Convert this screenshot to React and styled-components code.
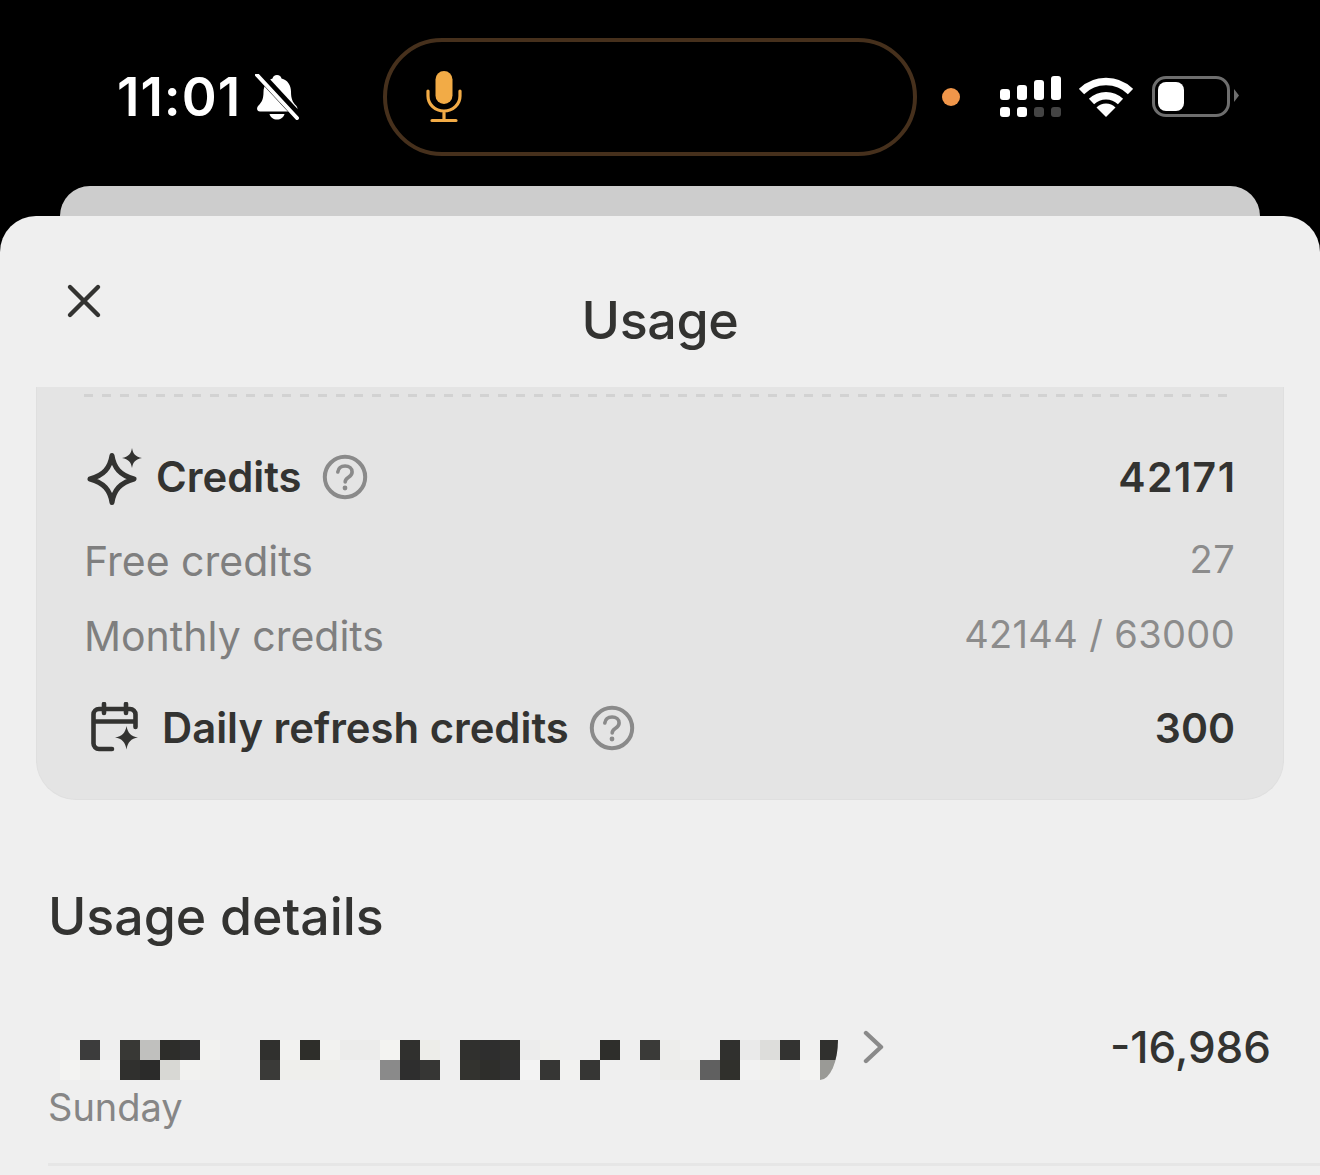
import React from 'react';
import styled, { createGlobalStyle } from 'styled-components';

const GlobalStyle = createGlobalStyle`
    html, body {
        margin: 0;
        padding: 0;
        background: #000;
    }
    body {
        font-family: Inter, "Liberation Sans", sans-serif;
    }
`;

const Screen = styled.div`
    width: 1320px;
    height: 1175px;
    overflow: hidden;
    background: #000;
`;

const StatusBar = styled.div`
    height: 186px;
    display: flex;
    align-items: flex-start;
    box-sizing: border-box;
    padding: 38px 0 0 117px;
`;

const Clock = styled.div`
    width: 138px;
    height: 118px;
    line-height: 118px;
    font-size: 53px;
    font-weight: 600;
    letter-spacing: 1px;
    color: #fff;
`;

const BellIcon = styled.svg`
    width: 44px;
    height: 46px;
    margin: 36px 84px 0 0;
`;

const Island = styled.div`
    width: 534px;
    height: 118px;
    box-sizing: border-box;
    border: 4px solid #46301c;
    border-radius: 59px;
    display: flex;
    align-items: center;
    padding-left: 39px;
`;

const StatusIcons = styled.div`
    display: flex;
    align-items: flex-start;
    margin: 0 0 0 26px;
    padding-top: 38px;
`;

const OrangeDot = styled.div`
    width: 18px;
    height: 18px;
    margin: 12px 40px 0 -1px;
    border-radius: 50%;
    background: #f0964a;
`;

const SignalIcon = styled.svg`
    width: 62px;
    height: 42px;
    margin-right: 17px;
`;

const WifiIcon = styled.svg`
    width: 54px;
    height: 40px;
    margin: 1px 19px 0 0;
`;

const Battery = styled.div`
    width: 78px;
    height: 41px;
    box-sizing: border-box;
    border: 3px solid #6e6e6e;
    border-radius: 14px;
    padding: 3px;
`;

const BatteryFill = styled.div`
    width: 26px;
    height: 100%;
    border-radius: 8px;
    background: #fff;
`;

const BatteryNub = styled.div`
    width: 5px;
    height: 13px;
    margin: 13px 0 0 4px;
    background: #6e6e6e;
    clip-path: polygon(0 0, 100% 50%, 0 100%);
`;

const BackSheet = styled.div`
    height: 30px;
    margin: 0 60px;
    border-radius: 30px 30px 0 0;
    background: #cdcdcd;
`;

const Sheet = styled.div`
    height: 959px;
    border-radius: 36px 36px 0 0;
    background: #efefef;
    color: #333331;
`;

const Header = styled.header`
    height: 171px;
    display: grid;
    grid-template-columns: 1fr auto 1fr;
    box-sizing: border-box;
`;

const CloseIcon = styled.svg`
    width: 38px;
    height: 38px;
    margin: 66px 0 0 65px;
`;

const Title = styled.h1`
    margin: 76px 0 0;
    font-size: 52px;
    line-height: 58px;
    font-weight: 500;
    letter-spacing: -0.4px;
`;

const CreditsCard = styled.section`
    height: 413px;
    margin: 0 36px;
    box-sizing: border-box;
    padding: 7px 48px 0 47px;
    background: #e4e4e4;
    border: 1px solid #dfdfdf;
    border-top: 0;
    border-radius: 0 0 40px 40px;
`;

const DashedLine = styled.div`
    height: 3px;
    margin: 0 5px 0 0;
    background: repeating-linear-gradient(90deg, #d2d2d2 0 9px, transparent 9px 18px);
`;

const Row = styled.div`
    display: flex;
    align-items: center;
    justify-content: space-between;
    height: ${props => props.$height}px;
    margin-top: ${props => props.$top || 0}px;
`;

const Label = styled.div`
    display: flex;
    align-items: center;
`;

const StrongText = styled.span`
    font-size: 41.8px;
    line-height: 48px;
    font-weight: 600;
    color: #333331;
`;

const StrongValue = styled.span`
    font-size: 41px;
    line-height: 48px;
    font-weight: 600;
    letter-spacing: ${props => props.$tracking || 0}px;
    margin-right: ${props => -(props.$tracking || 0)}px;
    color: #333331;
`;

const MutedText = styled.span`
    font-size: 41px;
    line-height: 48px;
    color: #7f7f7f;
`;

const MutedValue = styled.span`
    font-size: 38px;
    line-height: 46px;
    margin-top: -4px;
    color: #8c8c8c;
    letter-spacing: 0.35px;
`;

const RowIcon = styled.svg`
    width: ${props => props.$size}px;
    height: ${props => props.$size}px;
    margin: 0 ${props => props.$gap}px 0 ${props => props.$left}px;
    flex-shrink: 0;
`;

const HelpIcon = styled.svg`
    width: 46px;
    height: 46px;
    margin-left: 20px;
`;

const SectionTitle = styled.h2`
    margin: 87px 0 0 48px;
    font-size: 51.8px;
    line-height: 58px;
    font-weight: 500;
`;

const UsageRow = styled.div`
    display: flex;
    justify-content: space-between;
    margin: 95px 49px 0 48px;
`;

const NameLine = styled.div`
    display: flex;
    align-items: flex-start;
    padding-left: 12px;
`;

const Mosaic = styled.div`
    display: grid;
    grid-template-columns: repeat(39, 20px);
    grid-auto-rows: 20px;
    width: 778px;
    height: 40px;
    overflow: hidden;
    border-bottom-right-radius: 18px 40px;
`;

const Pixel = styled.div`
    background: ${props => props.$tone || 'transparent'};
`;

const ChevronIcon = styled.svg`
    width: 22px;
    height: 34px;
    margin: -10px 0 0 25px;
`;

const Amount = styled.div`
    font-size: 44px;
    line-height: 52px;
    font-weight: 500;
    margin-top: -19px;
`;

const DayText = styled.div`
    margin: 4px 0 0;
    font-size: 38px;
    line-height: 46px;
    color: #868686;
`;

const Divider = styled.div`
    height: 3px;
    margin: 33px 0 0 48px;
    background: #e6e6e6;
`;

const topPixels = [
    '#f2f2f1', '#3c3c3c', '', '#383835', '#c0c0be', '#2d2d2a', '#303030', '#f2f2f0', '', '', '#30302e', '#f2f2f0', '#2e2e2a', '#f2f2f0',
    '#ececeb', '#ececeb', '#f3f3f1', '#30302e', '#edede9', '', '#30302e', '#2e2e2e', '#30302e', '#ececec', '#efefed', '', '', '#2e2e2b',
    '', '#3a3a38', '#ededeb', '#f0f0ef', '', '#30302e', '#eaeaea', '#dddddb', '#333331', '#f1f1f0', '#30302e',
];

const bottomPixels = [
    '#f3f3f2', '#f0f0ee', '#f2f2f2', '#30302e', '#2b2b2a', '#d8d8d4', '#f2f2f0', '#f0f0ee', '', '', '#3a3a38', '#efefec', '#efefec', '#efefec',
    '', '', '#8a8a8a', '#2e2e2e', '#363634', '', '#33332f', '#2e2e2b', '#303030', '#f3f3f3', '#363634', '#f2f2f0', '#363634', '',
    '', '', '#ededeb', '#ededeb', '#606060', '#30302c', '#f2f2f2', '#f1f1ee', '', '#f3f3f2', '#9a9a96',
];

const helpGlyph = (
    <HelpIcon viewBox="0 0 46 46" fill="none">
        <circle cx="23" cy="23" r="20.2" stroke="#8a8a8a" strokeWidth="4" />
        <path d="M15.800 18c.6-4 3.600-6 7.300-6 4 0 7 2.400 7 5.900 0 2.900-1.900 4.300-3.900 5.600-1.900 1.200-3 2.200-3 4.500" stroke="#8a8a8a" strokeWidth="3.600" strokeLinecap="round" />
        <circle cx="23" cy="34" r="2.400" fill="#8a8a8a" />
    </HelpIcon>
);

export default function App() {
    return (
        <Screen>
            <GlobalStyle />
            <StatusBar>
                <Clock>11:01</Clock>
                <BellIcon viewBox="0 0 44 46">
                    <path d="M22 1c2.500 0 4 1.500 4.500 3.500 6 1.500 9.500 6.500 9.500 13 0 7 1.500 10.500 5 14 2.500 2.500 1.500 6-1.500 6H5c-3 0-4-3.500-1.500-6C7 28 8.500 24.500 8.500 18 8.500 11 13 6 17.500 4.500 18 2.500 19.500 1 22 1z" fill="#fff" />
                    <path d="M14.500 40h15c-.8 3.500-4 5.500-7.500 5.500s-6.700-2-7.500-5.500z" fill="#fff" />
                    <path d="M4 0 44 43" stroke="#000" strokeWidth="9" />
                    <path d="M2 1 42 44" stroke="#fff" strokeWidth="4" strokeLinecap="round" />
                </BellIcon>
                <Island>
                    <svg width="36" height="54" viewBox="0 0 36 54" fill="none">
                        <rect x="9.500" y="1" width="17" height="33" rx="8.500" fill="#f2ab46" />
                        <path d="M2 21v5c0 8.500 7 15 16 15s16-6.500 16-15v-5M18 41v9M6 50.500h24" stroke="#f2ab46" strokeWidth="3.200" strokeLinecap="round" />
                    </svg>
                </Island>
                <StatusIcons>
                    <OrangeDot />
                    <SignalIcon viewBox="0 0 62 42" fill="#fff">
                        <rect x="0" y="13" width="10" height="11" rx="3" />
                        <rect x="17" y="9" width="10" height="15" rx="3" />
                        <rect x="34" y="4" width="10" height="20" rx="3" />
                        <rect x="51" y="0" width="10" height="24" rx="3" />
                        <rect x="0" y="31" width="10" height="10" rx="3" />
                        <rect x="17" y="31" width="10" height="10" rx="3" />
                        <rect x="34" y="31" width="10" height="10" rx="3" fill="#444" />
                        <rect x="51" y="31" width="10" height="10" rx="3" fill="#444" />
                    </SignalIcon>
                    <WifiIcon viewBox="0 0 54 40" fill="none">
                        <path d="M2.500 14.500a35 35 0 0 1 49 0" stroke="#fff" strokeWidth="7.500" />
                        <path d="M12.500 24.500a21 21 0 0 1 29 0" stroke="#fff" strokeWidth="7.500" />
                        <path d="M27 40 17.500 30.500a13.500 13.500 0 0 1 19 0z" fill="#fff" />
                    </WifiIcon>
                    <Battery>
                        <BatteryFill />
                    </Battery>
                    <BatteryNub />
                </StatusIcons>
            </StatusBar>
            <BackSheet />
            <Sheet>
                <Header>
                    <CloseIcon viewBox="0 0 38 38" fill="none">
                        <path d="M5 5 33 33M33 5 5 33" stroke="#333331" strokeWidth="4.400" strokeLinecap="round" />
                    </CloseIcon>
                    <Title>Usage</Title>
                </Header>
                <CreditsCard>
                    <DashedLine />
                    <Row $height={48} $top={56}>
                        <Label>
                            <RowIcon $size={60} $left={0} $gap={12} viewBox="0 0 60 60" fill="none">
                                <path d="M28 8.500C30 21 36 28 50 32 36 36 30 43 28 55.500 26 43 20 36 6 32 20 28 26 21 28 8.500z" stroke="#333331" strokeWidth="5" strokeLinejoin="round" />
                                <path d="M48 1c1 6 3.500 8.500 10 10-6.500 1.500-9 4-10 10-1-6-3.500-8.500-10-10 6.500-1.500 9-4 10-10z" fill="#333331" />
                            </RowIcon>
                            <StrongText>Credits</StrongText>
                            {helpGlyph}
                        </Label>
                        <StrongValue $tracking={1.4}>42171</StrongValue>
                    </Row>
                    <Row $height={48} $top={36}>
                        <MutedText>Free credits</MutedText>
                        <MutedValue>27</MutedValue>
                    </Row>
                    <Row $height={48} $top={27}>
                        <MutedText>Monthly credits</MutedText>
                        <MutedValue>42144 / 63000</MutedValue>
                    </Row>
                    <Row $height={50} $top={43}>
                        <Label>
                            <RowIcon $size={52} $left={6} $gap={20} viewBox="0 0 52 52" fill="none">
                                <path d="M22 47H9a5.500 5.500 0 0 1-5.500-5.500v-29A5.500 5.500 0 0 1 9 7h31a5.500 5.500 0 0 1 5.500 5.500V25M3.500 19.500h42M14 2v9M36 2v9" stroke="#333331" strokeWidth="4.600" strokeLinecap="round" />
                                <path d="M36.500 24c1.200 7 4.500 10.300 11.500 11.500-7 1.200-10.300 4.500-11.500 12-1.200-7.500-4.500-10.800-11.500-12 7-1.200 10.300-4.500 11.500-11.500z" fill="#333331" />
                            </RowIcon>
                            <StrongText>Daily refresh credits</StrongText>
                            {helpGlyph}
                        </Label>
                        <StrongValue>300</StrongValue>
                    </Row>
                </CreditsCard>
                <SectionTitle>Usage details</SectionTitle>
                <UsageRow>
                    <div>
                        <NameLine>
                            <Mosaic>
                                {topPixels.map((tone, idx) => <Pixel key={`top_${idx}`} $tone={tone} />)}
                                {bottomPixels.map((tone, idx) => <Pixel key={`bottom_${idx}`} $tone={tone} />)}
                            </Mosaic>
                            <ChevronIcon viewBox="0 0 22 34" fill="none">
                                <path d="M3 3 18 17 3 31" stroke="#8a8a8a" strokeWidth="4.400" strokeLinecap="round" strokeLinejoin="round" />
                            </ChevronIcon>
                        </NameLine>
                        <DayText>Sunday</DayText>
                    </div>
                    <Amount>-16,986</Amount>
                </UsageRow>
                <Divider />
            </Sheet>
        </Screen>
    );
}
